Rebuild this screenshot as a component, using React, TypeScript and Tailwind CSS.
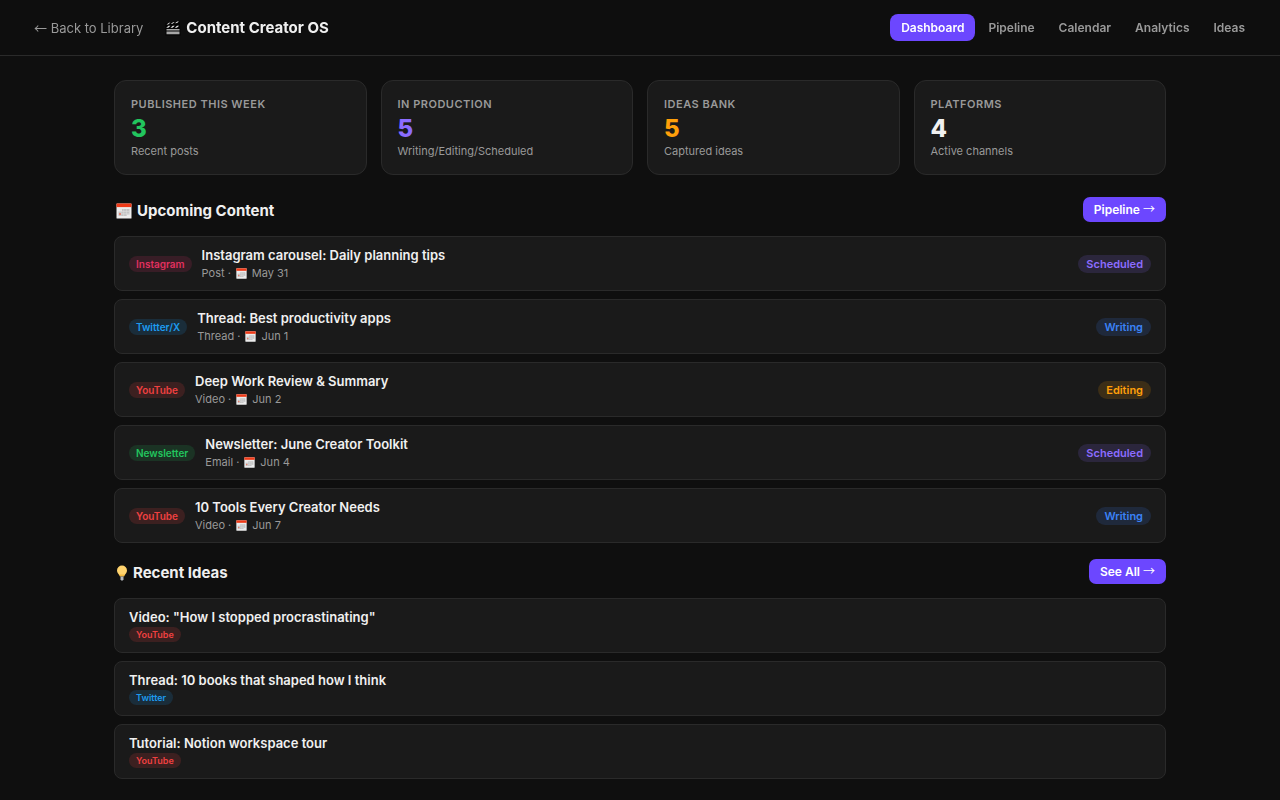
import { useState } from 'react';
import clsx from 'clsx';

const TABS = ['Dashboard', 'Pipeline', 'Calendar', 'Analytics', 'Ideas'];

const STATS = [
    { label: 'Published this week', value: 3, sub: 'Recent posts', color: 'text-[#22c55e]' },
    { label: 'In production', value: 5, sub: 'Writing/Editing/Scheduled', color: 'text-[#8b6cff]' },
    { label: 'Ideas bank', value: 5, sub: 'Captured ideas', color: 'text-[#ff9f0a]' },
    { label: 'Platforms', value: 4, sub: 'Active channels', color: 'text-[#f0f0f0]' },
];

const UPCOMING = [
    { platform: 'Instagram', title: 'Instagram carousel: Daily planning tips', type: 'Post', date: 'May 31', status: 'Scheduled' },
    { platform: 'Twitter/X', title: 'Thread: Best productivity apps', type: 'Thread', date: 'Jun 1', status: 'Writing' },
    { platform: 'YouTube', title: 'Deep Work Review & Summary', type: 'Video', date: 'Jun 2', status: 'Editing' },
    { platform: 'Newsletter', title: 'Newsletter: June Creator Toolkit', type: 'Email', date: 'Jun 4', status: 'Scheduled' },
    { platform: 'YouTube', title: '10 Tools Every Creator Needs', type: 'Video', date: 'Jun 7', status: 'Writing' },
];

const IDEAS = [
    { title: 'Video: "How I stopped procrastinating"', platform: 'YouTube' },
    { title: 'Thread: 10 books that shaped how I think', platform: 'Twitter' },
    { title: 'Tutorial: Notion workspace tour', platform: 'YouTube' },
];

const PLATFORM_STYLES: Record<string, string> = {
    Instagram: 'bg-[#e1306c]/15 text-[#e1305f]',
    'Twitter/X': 'bg-[#1d9bf0]/15 text-[#1d9bf0]',
    Twitter: 'bg-[#1d9bf0]/15 text-[#1d9bf0]',
    YouTube: 'bg-[#ff4444]/15 text-[#f04040]',
    Newsletter: 'bg-[#22c55e]/15 text-[#22c55e]',
};

const STATUS_STYLES: Record<string, string> = {
    Scheduled: 'bg-[#8b6cff]/15 text-[#8b6cff]',
    Writing: 'bg-[#3b82f6]/15 text-[#3b82f6]',
    Editing: 'bg-[#ff9f0a]/15 text-[#ff9f0a]',
};

const CalendarIcon = ({ className }: { className?: string }) => (
    <svg viewBox="0 0 16 16" className={className} aria-hidden="true">
        <rect x="0.5" y="0.5" width="15" height="15" rx="0.5" fill="#ececec" />
        <rect x="0.5" y="0.5" width="15" height="3.6" fill="#f03a17" />
        <path d="M6 6h7.5v5.5H11V13H2.5V8.5H6z" fill="#c4c4c4" />
        <path d="M2.5 8.5h11M2.5 10.8h11M5 6v7M7.7 6v7M10.4 6v7" stroke="#dcdcdc" strokeWidth="0.6" />
        <circle cx="4" cy="11" r="1.1" fill="#e8735f" />
    </svg>
);

const BulbIcon = ({ className }: { className?: string }) => (
    <svg viewBox="0 0 12 16" className={className} aria-hidden="true">
        <path d="M6 0.5a5 5 0 0 0-5 5c0 2.3 1.6 3.2 2.4 5h5.2C9.4 8.7 11 7.8 11 5.5a5 5 0 0 0-5-5z" fill="#ffd36e" />
        <path d="M3.4 9.5h5.2l-.5 2H3.900z" fill="#f5b93d" />
        <path d="M4.5 11.5h3v3L6.8 15.5H5.2l-.7-1z" fill="#b4b8bd" />
    </svg>
);

const ClapperIcon = ({ className }: { className?: string }) => (
    <svg viewBox="0 0 16 16" className={className} aria-hidden="true">
        <path d="M0.5 3.2 14.8 0.8 15.5 15.5H0.5z" fill="#030303" />
        <path d="M1.5 4.6 4 2.8l1.5-.2L3.2 4.4zM5.7 3.9 8 2.2l1.7-.2L7.5 3.7zM10 3.3l2.200-1.700 1.800-.2-2 1.700z" fill="#e0e0e0" />
        <path d="M1.2 7.8 3.5 5.8h2L3.3 7.8zM5.5 7.8 7.8 5.8h2L7.6 7.8zM9.8 7.8l2.300-2h2l-2.200 2z" fill="#e0e0e0" />
        <path d="M1.5 9h13v1.5h-13zM1.5 11.4h13v2.800h-13z" fill="#a6a6a6" />
    </svg>
);

const Arrow = ({ children }: { children: string }) => (
    <span className="font-['Noto_Sans_CJK_JP',sans-serif] font-normal leading-none">{children}</span>
);

const SectionHeader = ({ icon, title, action }: { icon: React.ReactNode; title: string; action: string }) => (
    <div className="flex items-center justify-between mb-3.5">
        <h2 className="flex items-center pt-0.5 text-[15px] leading-5 font-bold text-[#f0f0f0]">
            {icon}
            {title}
        </h2>
        <button className="h-[25px] px-[11px] rounded-[7px] bg-[#6c47ff] text-[12px] leading-4 font-semibold text-white">
            {action} <Arrow>→</Arrow>
        </button>
    </div>
);

export default function App() {
    const [tab, setTab] = useState('Dashboard');

    return (
        <div className="min-h-screen bg-[#0f0f0f] font-['Inter',sans-serif] text-[#f0f0f0]">
            {/* ── TOP BAR ── */}
            <header className="sticky top-0 z-10 flex items-center justify-between px-6 py-3.5 border-b border-[#2a2a2a] bg-[#0f0f0f]/95 backdrop-blur-sm">
                <div className="flex items-center">
                    <a href="#" className="px-2.5 text-[13px] leading-5 text-[#999]"><Arrow>←</Arrow> Back to Library</a>
                    <h1 className="flex items-center ml-3 text-[15px] leading-5 font-bold">
                        <ClapperIcon className="w-4 h-4 mr-[5px]" />
                        Content Creator OS
                    </h1>
                </div>
                <nav className="flex gap-0.5">
                    {TABS.map(t => (
                        <button
                            key={t}
                            onClick={() => setTab(t)}
                            className={clsx(
                                'h-[27px] px-[11px] rounded-lg text-[12px] font-semibold',
                                t === tab ? 'bg-[#6c47ff] text-white' : 'text-[#999]'
                            )}
                        >
                            {t}
                        </button>
                    ))}
                </nav>
            </header>

            <main className="max-w-[1100px] mx-auto px-6 pt-6 pb-3">
                {/* ── STATS ── */}
                <section className="grid grid-cols-4 gap-3.5 mb-[22px]">
                    {STATS.map(s => (
                        <div key={s.label} className="px-4 pt-4 pb-3.5 rounded-xl border border-[#2a2a2a] bg-[#1a1a1a]">
                            <div className="mb-1 text-[11px] leading-[14px] font-semibold uppercase tracking-[0.5px] text-[#999]">{s.label}</div>
                            <div className={clsx('text-[24px] leading-7 font-extrabold', s.color)}>{s.value}</div>
                            <div className="text-[11px] leading-[17px] text-[#999]">{s.sub}</div>
                        </div>
                    ))}
                </section>

                {/* ── UPCOMING ── */}
                <section className="mb-4">
                    <SectionHeader icon={<CalendarIcon className="w-4 h-4 ml-0.5 mr-[5px]" />} title="Upcoming Content" action="Pipeline" />
                    <ul className="flex flex-col gap-2">
                        {UPCOMING.map(item => (
                            <li key={item.title} className="flex items-center gap-2.5 h-[55px] px-3.5 rounded-lg border border-[#2a2a2a] bg-[#1a1a1a]">
                                <span className={clsx('px-[7px] rounded-full text-[10px] leading-4 font-semibold', PLATFORM_STYLES[item.platform])}>
                                    {item.platform}
                                </span>
                                <div className="flex-1 min-w-0">
                                    <div className="text-[13px] leading-5 font-semibold truncate">{item.title}</div>
                                    <div className="flex items-center text-[11px] leading-[17px] text-[#999]">
                                        {item.type} ·
                                        <CalendarIcon className="w-[11px] h-[11px] mx-[5px]" />
                                        {item.date}
                                    </div>
                                </div>
                                <span className={clsx('px-2 rounded-full text-[11px] leading-[18px] font-semibold', STATUS_STYLES[item.status])}>
                                    {item.status}
                                </span>
                            </li>
                        ))}
                    </ul>
                </section>

                {/* ── IDEAS ── */}
                <section>
                    <SectionHeader icon={<BulbIcon className="w-3 h-4 ml-0.5 mr-[5px]" />} title="Recent Ideas" action="See All" />
                    <ul className="flex flex-col gap-2">
                        {IDEAS.map(idea => (
                            <li key={idea.title} className="flex flex-col items-start h-[55px] px-3.5 pt-2 rounded-lg border border-[#2a2a2a] bg-[#1a1a1a]">
                                <div className="text-[13px] leading-5 font-semibold">{idea.title}</div>
                                <span className={clsx('px-[7px] rounded-full text-[9px] leading-[15px] font-semibold', PLATFORM_STYLES[idea.platform])}>
                                    {idea.platform}
                                </span>
                            </li>
                        ))}
                    </ul>
                </section>
            </main>
        </div>
    );
}
